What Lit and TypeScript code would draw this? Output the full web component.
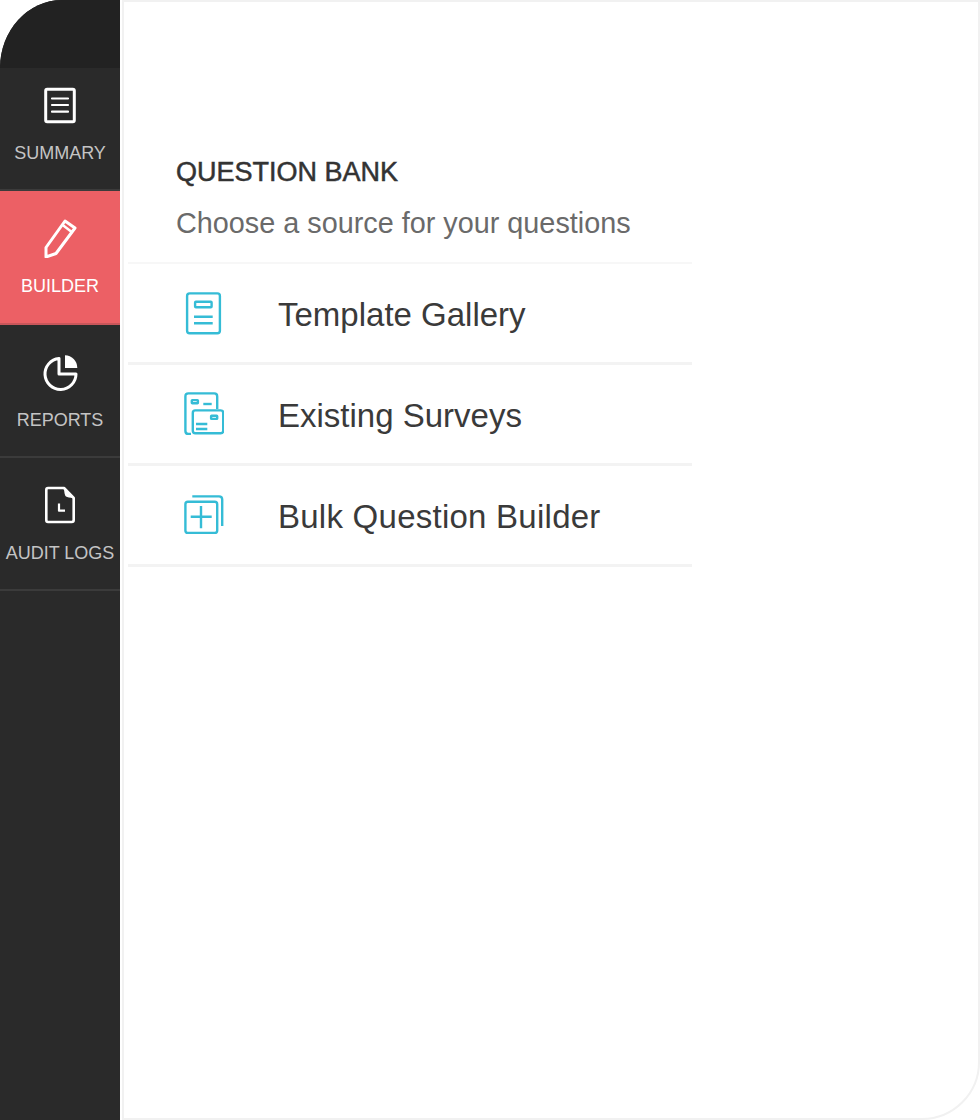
import { LitElement, html, css, svg } from "lit";
import { customElement } from "lit/decorators.js";

const navItems = [
  { label: "SUMMARY", active: false, icon: svg`<rect x="3.700" y="4.300" width="28.600" height="32.400" rx="1.500"/><path d="M10 13.500h16M10 20h16M10 26.700h16" stroke-width="2.200"/>` },
  { label: "BUILDER", active: true, icon: svg`<path d="M4 39V29.500L23 3L33 10L14 35.500Z"/><path d="M21.300 7.500L29.700 14" stroke-width="2.500"/>` },
  { label: "REPORTS", active: false, icon: svg`<path d="M17 6.500V22H34A15.500 15.500 0 1 1 17 6.500Z"/><path d="M23 3.300A12.500 12.700 0 0 1 35.300 16H23Z" class="solid"/>` },
  { label: "AUDIT LOGS", active: false, icon: svg`<path d="M6 3H22L31.700 13V35Q31.700 37 29.700 37H6Q4.300 37 4.300 35V5Q4.300 3 6 3Z" stroke-width="2.600"/><path d="M22 3.500Q22.500 11 24 11.500Q26 12.500 31.500 13Z" class="solid"/><path d="M17 18.500V25.700H23" stroke-width="2.200" stroke-linecap="butt"/>` },
];

const rows = [
  { label: "Template Gallery", wide: false, icon: svg`<rect x="5.100" y="2.400" width="32.800" height="39.800" rx="2.500"/><rect x="13.100" y="10.800" width="16.500" height="5.400" rx=".8"/><path d="M12 25.700h18.700M12 32.300h18.700"/>` },
  { label: "Existing Surveys", wide: false, icon: svg`<path d="M9 41.900H6.400Q3.400 41.900 3.400 38.900V4.400Q3.400 1.400 6.400 1.400H32.200Q35.200 1.400 35.200 4.400V17"/><rect x="10.800" y="18.400" width="30.400" height="22.800" rx="2.500"/><rect x="9.800" y="8.100" width="6.100" height="3.100" rx=".5"/><path d="M21.300 12h8.400"/><rect x="29.100" y="23.800" width="6.100" height="3.100" rx=".5"/><path d="M14 32h11.300M14 37h11.300"/>` },
  { label: "Bulk Question Builder", wide: true, icon: svg`<rect x="3.400" y="8.800" width="31.800" height="31.100" rx="2.500"/><path d="M10.300 3.400H37Q40.200 3.400 40.200 6.600V33"/><path d="M19 13V35.300M8.700 23.700H29.700"/>` },
];

@customElement("app-root")
export class AppRoot extends LitElement {
  static styles = css`
    :host {
      display: flex;
      width: 980px;
      height: 1120px;
      font-family: "Liberation Sans", Arial, sans-serif;
      background: #fff;
      overflow: hidden;
    }
    .sidebar {
      width: 120px;
      flex: none;
      background: #2a2a2a;
      border-top-left-radius: 62px 68px;
      display: flex;
      flex-direction: column;
      overflow: hidden;
    }
    .cap { height: 68px; background: #222; flex: none; }
    .nav {
      height: 133px;
      flex: none;
      box-sizing: border-box;
      display: flex;
      flex-direction: column;
      align-items: center;
      padding-top: 27px;
      border-bottom: 2px solid #3b3b3b;
      color: #c4c4c4;
      font-size: 18px;
      line-height: 20px;
    }
    .nav svg {
      display: block;
      fill: none;
      stroke: #fff;
      stroke-width: 3;
      stroke-linejoin: round;
      stroke-linecap: round;
    }
    .nav svg .solid { fill: #fff; stroke: none; }
    .nav .name { margin-top: 18px; white-space: nowrap; }
    .nav.first { height: 123px; padding-top: 17px; }
    .nav.active { background: #ec6065; color: #fff; border-bottom-color: #c9565a; height: 134px; }
    .gutter { width: 2px; flex: none; }
    .panel {
      flex: 1;
      border: 2px solid #f1f1f1;
      border-bottom-right-radius: 58px;
      padding: 155px 0 0 4px;
      box-sizing: border-box;
    }
    .head { padding-left: 48px; }
    .title {
      margin: 0;
      font-size: 27px;
      line-height: 30px;
      font-weight: 400;
      color: #333;
      -webkit-text-stroke: .5px #333;
    }
    .sub { margin: 21px 0 0; font-size: 28.800px; line-height: 30px; color: #6a6a6a; }
    .list { margin-top: 24px; width: 564px; border-top: 2px solid #f7f7f7; }
    .row {
      height: 98px;
      box-sizing: content-box;
      border-bottom: 3px solid #f3f3f3;
      display: flex;
      align-items: center;
      font-size: 33px;
      color: #3a3a3a;
      padding-bottom: 0;
    }
    .row .inner { display: flex; align-items: center; margin-top: 4px; }
    .row .ic { width: 150px; flex: none; display: flex; justify-content: center; }
    .row svg { fill: none; stroke: #35bcd6; stroke-width: 2.400; display: block; }
    .row .wide { letter-spacing: .25px; }
  `;

  render() {
    return html`
      <aside class="sidebar">
        <div class="cap"></div>
        ${navItems.map((n, i) => html`
          <div class="nav ${i === 0 ? "first" : ""} ${n.active ? "active" : ""}">
            <svg width="36" height="40" viewBox="0 0 36 40">${n.icon}</svg>
            <div class="name">${n.label}</div>
          </div>`)}
      </aside>
      <div class="gutter"></div>
      <main class="panel">
        <div class="head">
          <h1 class="title">QUESTION BANK</h1>
          <p class="sub">Choose a source for your questions</p>
        </div>
        <div class="list">
          ${rows.map((r) => html`
            <div class="row">
              <div class="inner">
                <div class="ic"><svg width="42" height="48" viewBox="0 0 42 48">${r.icon}</svg></div>
                <span class=${r.wide ? "wide" : ""}>${r.label}</span>
              </div>
            </div>`)}
        </div>
      </main>
    `;
  }
}
